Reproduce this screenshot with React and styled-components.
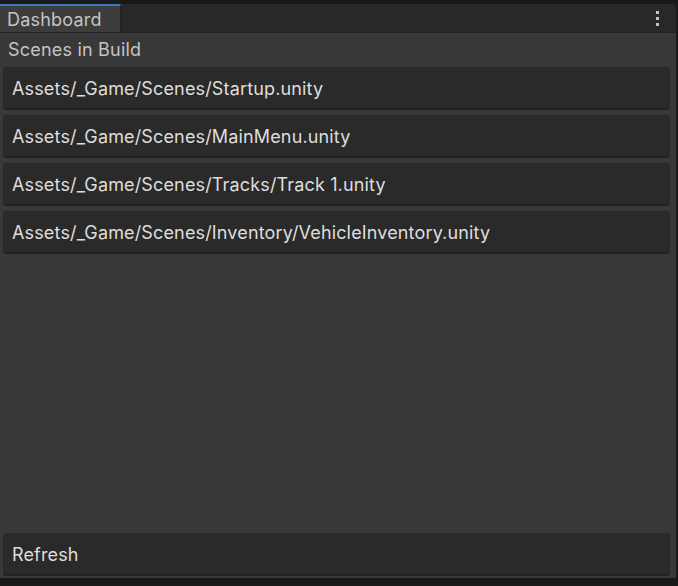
import React from "react";
import styled, { createGlobalStyle } from "styled-components";

const Global = createGlobalStyle`
  html, body, #root { margin: 0; padding: 0; height: 100%; }
  body { background: #191919; font-family: Inter, "Noto Sans", sans-serif; overflow: hidden; }
`;

const Window = styled.div`
  box-sizing: border-box;
  height: 100vh;
  padding: 4px 2px 8px 0;
  display: flex;
  flex-direction: column;
`;

const TabBar = styled.div`
  height: 28px;
  background: #282828;
  border-top-right-radius: 4px;
  display: flex;
  align-items: stretch;
  justify-content: space-between;
  border-bottom: 1px solid #232323;
`;

const Tab = styled.div`
  box-sizing: border-box;
  width: 121px;
  background: #3c3c3c;
  border-top: 2px solid #3a79bb;
  border-right: 1px solid #232323;
  color: #c4c4c4;
  font-size: 18px;
  letter-spacing: 0.2px;
  padding-left: 7px;
  display: flex;
  align-items: center;
  padding-top: 1px;
`;

const Menu = styled.div`
  width: 30px;
  display: flex;
  flex-direction: column;
  align-items: center;
  justify-content: center;
  gap: 3px;
  margin-right: 4px;
`;

const Dot = styled.span`
  width: 3px;
  height: 3px;
  background: #c4c4c4;
`;

const Content = styled.div`
  flex: 1;
  background: #383838;
  display: flex;
  flex-direction: column;
  padding: 0 6px 2px 3px;
`;

const Heading = styled.div`
  color: #c4c4c4;
  font-size: 18px;
  letter-spacing: 0.2px;
  height: 32px;
  display: flex;
  align-items: center;
  padding-left: 5px;
  margin-bottom: 2px;
`;

const List = styled.div`
  display: flex;
  flex-direction: column;
  gap: 5px;
  flex: 1;
`;

const Row = styled.div`
  box-sizing: border-box;
  height: 43px;
  background: #2a2a2a;
  border-radius: 3px;
  border-bottom: 2px solid #232323;
  color: #dedede;
  font-size: 18px;
  letter-spacing: 0.15px;
  display: flex;
  align-items: center;
  padding-left: 9px;
  padding-top: 1px;
`;

const Button = styled(Row)`
  cursor: pointer;
`;

const scenes = [
  "Assets/_Game/Scenes/Startup.unity",
  "Assets/_Game/Scenes/MainMenu.unity",
  "Assets/_Game/Scenes/Tracks/Track 1.unity",
  "Assets/_Game/Scenes/Inventory/VehicleInventory.unity",
];

export default function App() {
  return (
    <>
      <Global />
      <Window>
        <TabBar>
          <Tab>Dashboard</Tab>
          <Menu>
            <Dot />
            <Dot />
            <Dot />
          </Menu>
        </TabBar>
        <Content>
          <Heading>Scenes in Build</Heading>
          <List>
            {scenes.map((s) => (
              <Row key={s}>{s}</Row>
            ))}
          </List>
          <Button>Refresh</Button>
        </Content>
      </Window>
    </>
  );
}
